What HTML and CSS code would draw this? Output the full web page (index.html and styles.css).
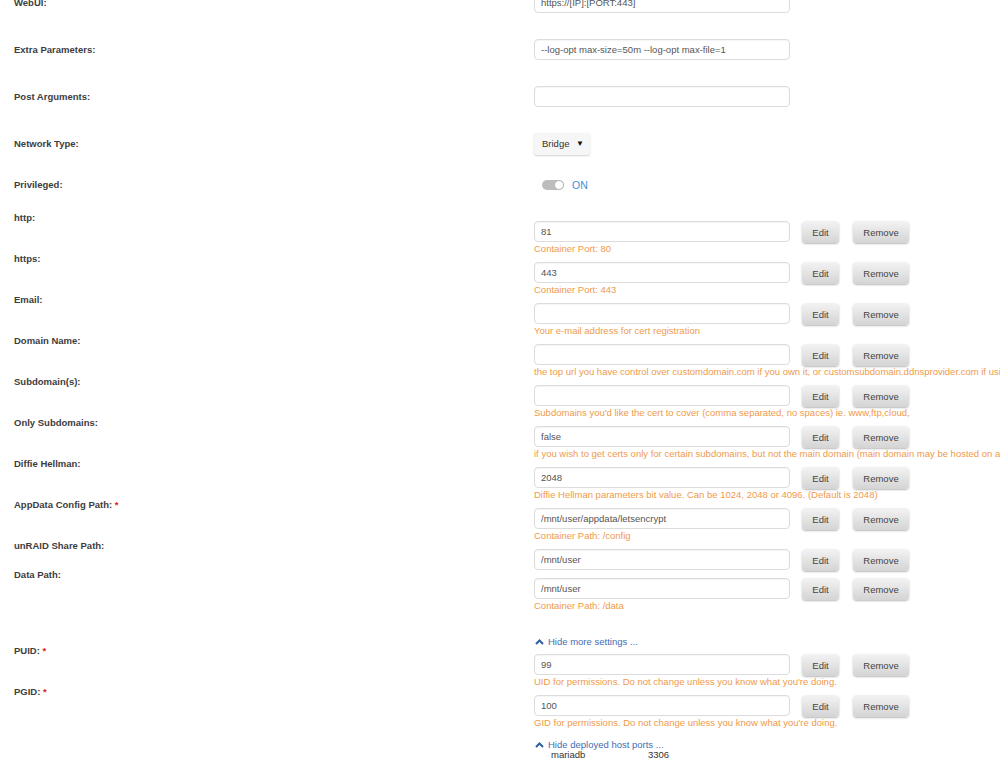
FILE: index.html
```html
<!DOCTYPE html>
<html>
<head>
<meta charset="utf-8">
<link rel="stylesheet" href="styles.css">
</head>
<body>
<div class="page">
  <div class="top-row">
    <div class="label">WebUI:</div>
    <div class="field">https://[IP]:[PORT:443]</div>
  </div>
  <div class="top-row">
    <div class="label">Extra Parameters:</div>
    <div class="field">--log-opt max-size=50m --log-opt max-file=1</div>
  </div>
  <div class="top-row">
    <div class="label">Post Arguments:</div>
    <div class="field"></div>
  </div>
  <div class="top-row">
    <div class="label">Network Type:</div>
    <div class="select"><span>Bridge</span><span class="caret">&#9660;</span></div>
  </div>
  <div class="top-row priv-row">
    <div class="label">Privileged:</div>
    <div class="switch-wrap"><span class="switch"><span class="knob"></span></span><span class="on">ON</span></div>
  </div>

  <div class="config">
    <div class="row">
      <div class="label">http:</div>
      <div class="value">
        <div class="controls"><div class="field">81</div><div class="btn edit">Edit</div><div class="btn remove">Remove</div></div>
        <div class="desc">Container Port: 80</div>
      </div>
    </div>
    <div class="row">
      <div class="label">https:</div>
      <div class="value">
        <div class="controls"><div class="field">443</div><div class="btn edit">Edit</div><div class="btn remove">Remove</div></div>
        <div class="desc">Container Port: 443</div>
      </div>
    </div>
    <div class="row">
      <div class="label">Email:</div>
      <div class="value">
        <div class="controls"><div class="field"></div><div class="btn edit">Edit</div><div class="btn remove">Remove</div></div>
        <div class="desc">Your e-mail address for cert registration</div>
      </div>
    </div>
    <div class="row">
      <div class="label">Domain Name:</div>
      <div class="value">
        <div class="controls"><div class="field"></div><div class="btn edit">Edit</div><div class="btn remove">Remove</div></div>
        <div class="desc">the top url you have control over customdomain.com if you own it, or customsubdomain.ddnsprovider.com if using dynamic dns</div>
      </div>
    </div>
    <div class="row">
      <div class="label">Subdomain(s):</div>
      <div class="value">
        <div class="controls"><div class="field"></div><div class="btn edit">Edit</div><div class="btn remove">Remove</div></div>
        <div class="desc">Subdomains you'd like the cert to cover (comma separated, no spaces) ie. www,ftp,cloud,</div>
      </div>
    </div>
    <div class="row">
      <div class="label">Only Subdomains:</div>
      <div class="value">
        <div class="controls"><div class="field">false</div><div class="btn edit">Edit</div><div class="btn remove">Remove</div></div>
        <div class="desc">if you wish to get certs only for certain subdomains, but not the main domain (main domain may be hosted on another machine and cannot be validated)</div>
      </div>
    </div>
    <div class="row">
      <div class="label">Diffie Hellman:</div>
      <div class="value">
        <div class="controls"><div class="field">2048</div><div class="btn edit">Edit</div><div class="btn remove">Remove</div></div>
        <div class="desc">Diffie Hellman parameters bit value. Can be 1024, 2048 or 4096. (Default is 2048)</div>
      </div>
    </div>
    <div class="row">
      <div class="label">AppData Config Path: <span class="req">*</span></div>
      <div class="value">
        <div class="controls"><div class="field">/mnt/user/appdata/letsencrypt</div><div class="btn edit">Edit</div><div class="btn remove">Remove</div></div>
        <div class="desc">Container Path: /config</div>
      </div>
    </div>
    <div class="row">
      <div class="label">unRAID Share Path:</div>
      <div class="value">
        <div class="controls"><div class="field">/mnt/user</div><div class="btn edit">Edit</div><div class="btn remove">Remove</div></div>
      </div>
    </div>
    <div class="row">
      <div class="label">Data Path:</div>
      <div class="value">
        <div class="controls"><div class="field">/mnt/user</div><div class="btn edit">Edit</div><div class="btn remove">Remove</div></div>
        <div class="desc">Container Path: /data</div>
      </div>
    </div>

    <div class="more"><svg class="chev" width="9" height="6" viewBox="0 0 9 6"><path d="M1 5 L4.5 1.5 L8 5" fill="none" stroke="#2f5f9e" stroke-width="2"/></svg>Hide more settings ...</div>

    <div class="row">
      <div class="label">PUID: <span class="req">*</span></div>
      <div class="value">
        <div class="controls"><div class="field">99</div><div class="btn edit">Edit</div><div class="btn remove">Remove</div></div>
        <div class="desc">UID for permissions. Do not change unless you know what you're doing.</div>
      </div>
    </div>
    <div class="row">
      <div class="label">PGID: <span class="req">*</span></div>
      <div class="value">
        <div class="controls"><div class="field">100</div><div class="btn edit">Edit</div><div class="btn remove">Remove</div></div>
        <div class="desc">GID for permissions. Do not change unless you know what you're doing.</div>
      </div>
    </div>

    <div class="more more-ports"><svg class="chev" width="9" height="6" viewBox="0 0 9 6"><path d="M1 5 L4.5 1.5 L8 5" fill="none" stroke="#2f5f9e" stroke-width="2"/></svg>Hide deployed host ports ...</div>
    <div class="ports"><span class="pname">mariadb</span><span>3306</span></div>
  </div>
</div>
</body>
</html>
```
FILE: styles.css
```css
html, body {
  margin: 0;
  background: #fff;
  overflow: hidden;
}
body {
  font-family: "Liberation Sans", Arial, sans-serif;
  font-size: 9.5px;
  color: #444;
}
.page {
  margin-top: -21px;
  padding-left: 14px;
}
.top-row {
  display: flex;
  align-items: center;
  height: 47px;
}
.priv-row {
  height: 36px;
}
.label {
  width: 520px;
  flex: none;
  font-weight: bold;
  color: #3d3d3d;
  line-height: 12px;
}
.req {
  color: #e02020;
}
.field {
  width: 256px;
  height: 21px;
  box-sizing: border-box;
  flex: none;
  border: 1px solid #dcdcdc;
  border-radius: 4px;
  background: #fff;
  box-shadow: inset 0 1px 1px rgba(0,0,0,0.04);
  padding: 0 6px;
  line-height: 19px;
  color: #555;
  white-space: nowrap;
  overflow: hidden;
}
.select {
  width: 56px;
  height: 22px;
  box-sizing: border-box;
  border-radius: 3px;
  background: #f6f6f6;
  box-shadow: 0 1px 2px rgba(0,0,0,0.18);
  display: flex;
  align-items: center;
  justify-content: space-between;
  padding: 0 6px 0 8px;
  color: #333;
}
.caret {
  font-size: 8px;
  color: #111;
}
.switch-wrap {
  display: flex;
  align-items: center;
  padding-left: 8px;
}
.switch {
  position: relative;
  width: 22px;
  height: 10px;
  border-radius: 5px;
  background: #bdbdbd;
  display: inline-block;
}
.knob {
  position: absolute;
  right: 0;
  top: 0;
  width: 10px;
  height: 10px;
  box-sizing: border-box;
  border-radius: 50%;
  background: #fff;
  border: 1px solid #b5b5b5;
}
.on {
  margin-left: 8px;
  color: #3d8fd6;
  font-size: 10.5px;
}
.config {
  margin-top: 18px;
}
.row {
  display: flex;
  align-items: flex-start;
  margin-bottom: 7px;
}
.row .label {
  margin-top: -9px;
}
.controls {
  display: flex;
  align-items: flex-start;
  height: 22px;
}
.btn {
  height: 22px;
  box-sizing: border-box;
  border-radius: 4px;
  background: linear-gradient(#f3f3f3, #d4d4d4);
  box-shadow: 0 1px 2px rgba(0,0,0,0.28);
  color: #444;
  display: flex;
  align-items: center;
  justify-content: center;
  flex: none;
}
.edit {
  width: 37px;
  margin-left: 12px;
}
.remove {
  width: 56px;
  margin-left: 14px;
}
.desc {
  color: #ef9a4c;
  line-height: 12px;
  white-space: nowrap;
}
.more {
  margin: 24px 0 6px 520px;
  line-height: 12px;
  color: #3f6db3;
  display: flex;
  align-items: center;
  white-space: nowrap;
}
.chev {
  margin: 0 4px 0 1px;
}
.more-ports {
  margin-top: 11px;
  margin-bottom: 0;
  line-height: 10px;
}
.ports {
  display: flex;
  padding-left: 537px;
  line-height: 9px;
  color: #333;
}
.pname {
  width: 97px;
}
```
